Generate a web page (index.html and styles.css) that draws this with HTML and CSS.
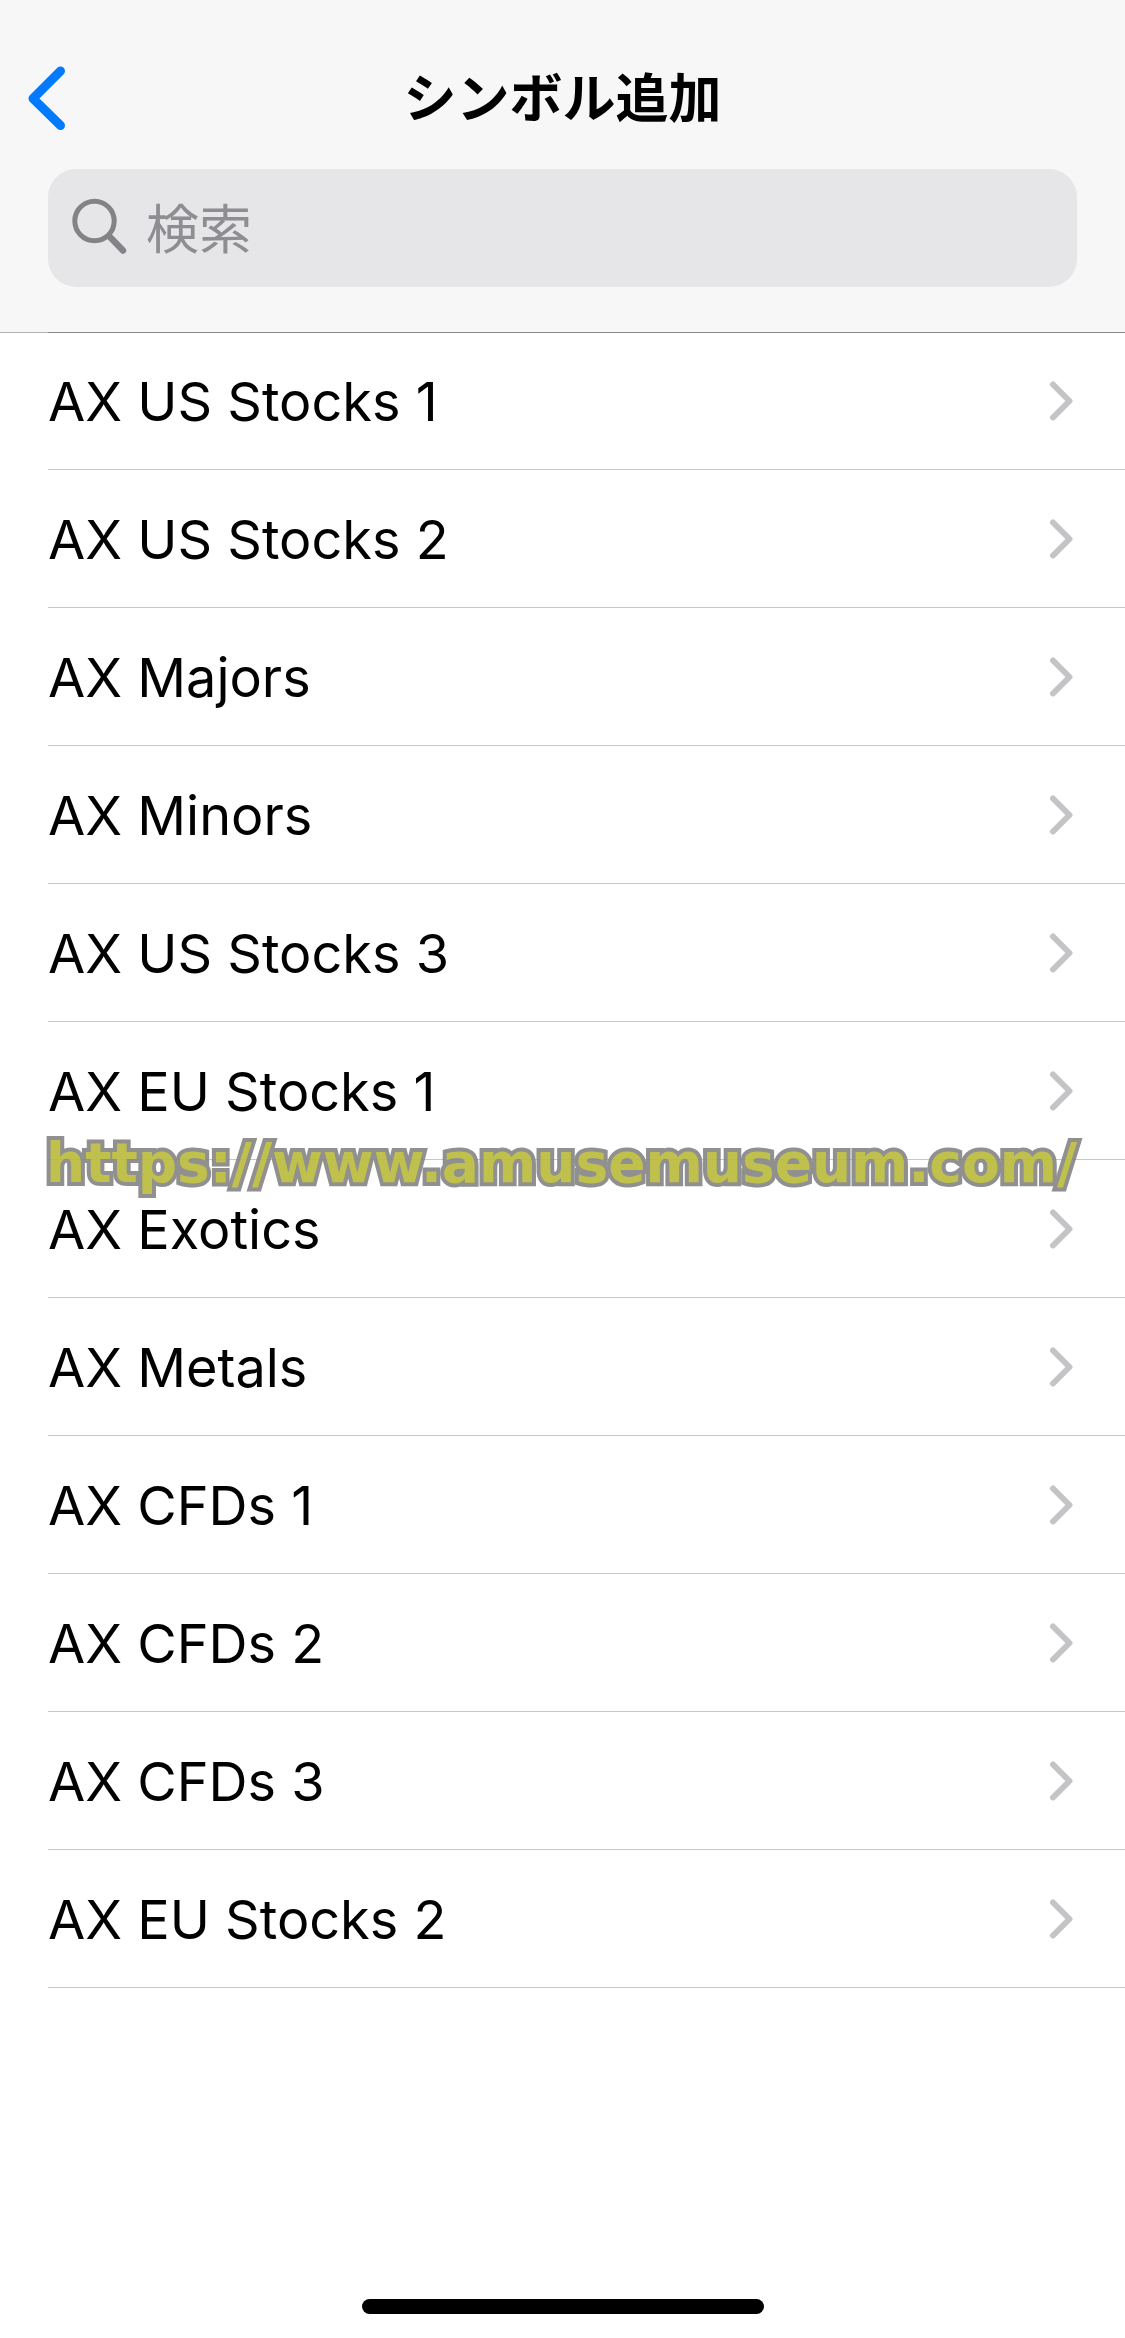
FILE: index.html
```
<!DOCTYPE html>
<html lang="ja">
<head>
    <meta charset="utf-8">
    <meta name="viewport" content="width=device-width, initial-scale=1">
    <title>シンボル追加</title>
    <link rel="stylesheet" href="styles.css">
</head>
<body>
    <header class="header">
        <div class="navbar">
            <button type="button" class="back" aria-label="戻る">
                <svg width="38" height="64" viewBox="0 0 38 64" fill="none" stroke="#007aff" stroke-width="9" stroke-linecap="round" stroke-linejoin="round">
                    <path d="M32.500 5 5 32.500l27.500 27"/>
                </svg>
            </button>
            <h1 class="title">シンボル追加</h1>
        </div>
        <form class="search">
            <svg class="search-icon" width="56" height="60" viewBox="0 0 56 60" fill="none" stroke="#838387" stroke-linecap="round">
                <circle cx="22.500" cy="23" r="19.700" stroke-width="5"/>
                <path d="M37 38 51 52.500" stroke-width="6.500"/>
            </svg>
            <input type="search" class="search-input" placeholder="検索" aria-label="検索">
        </form>
    </header>

    <main>
        <ul class="list">
            <li><a href="#" class="row">AX US Stocks 1</a></li>
            <li><a href="#" class="row">AX US Stocks 2</a></li>
            <li><a href="#" class="row">AX Majors</a></li>
            <li><a href="#" class="row">AX Minors</a></li>
            <li><a href="#" class="row">AX US Stocks 3</a></li>
            <li>
                <a href="#" class="row">AX EU Stocks 1</a>
                <span class="watermark">https://www.amusemuseum.com/</span>
            </li>
            <li><a href="#" class="row">AX Exotics</a></li>
            <li><a href="#" class="row">AX Metals</a></li>
            <li><a href="#" class="row">AX CFDs 1</a></li>
            <li><a href="#" class="row">AX CFDs 2</a></li>
            <li><a href="#" class="row">AX CFDs 3</a></li>
            <li><a href="#" class="row">AX EU Stocks 2</a></li>
        </ul>
    </main>

    <div class="home-indicator"></div>

    <!-- disclosure arrow at the end of each row -->
    <script>
        document.querySelectorAll(".row").forEach((row) => {
            row.insertAdjacentHTML("beforeend",
                '<svg class="chevron" width="24" height="42" viewBox="0 0 24 42" fill="none" stroke="#c4c4c7" stroke-width="6" stroke-linecap="round" stroke-linejoin="round"><path d="M4 3.500 20.500 20 4 36.500"/></svg>');
        });
    </script>
</body>
</html>
```
FILE: styles.css
```
* {
    box-sizing: border-box;
}

body {
    display: flex;
    flex-direction: column;
    min-height: 100vh;
    margin: 0;
    background-color: #fff;
    color: #000;
    font-family: Inter, "Noto Sans CJK JP", sans-serif;
}

.header {
    position: relative;
    padding: 32px 48px 45px;
    background-color: #f7f7f7;
    box-shadow: 0 1px 0 rgba(0, 0, 0, 0.3);
}

.navbar {
    display: grid;
    grid-template-columns: 1fr auto 1fr;
    align-items: center;
    height: 132px;
    margin-bottom: 5px;
}

.back {
    justify-self: start;
    height: 64px;
    margin-left: -20px;
    padding: 0;
    border: none;
    background: none;
    cursor: pointer;
}

.back svg {
    display: block;
}

.title {
    margin: 0;
    padding-bottom: 6px;
    font-family: "Noto Sans CJK JP", sans-serif;
    font-size: 53px;
    font-weight: bold;
    line-height: 72px;
}

.search {
    display: flex;
    align-items: center;
    gap: 18px;
    height: 118px;
    margin: 0;
    padding: 0 24px;
    border-radius: 28px;
    background-color: #e6e6e8;
}

.search-icon {
    flex: none;
}

.search-input {
    flex: 1;
    min-width: 0;
    height: 100%;
    padding: 0 0 4px;
    border: none;
    outline: none;
    background: none;
    font-family: "Noto Sans CJK JP", sans-serif;
    font-size: 53px;
}

.search-input::placeholder {
    color: #8e8e92;
}

.list {
    margin: 0;
    padding: 0 0 0 48px;
    list-style: none;
}

.list li {
    position: relative;
    border-bottom: 1px solid #c6c6c8;
}

.list li:first-child {
    box-shadow: inset 0 1px 0 #8a8a8c;
}

.row {
    display: flex;
    align-items: center;
    justify-content: space-between;
    height: 137px;
    padding: 2px 52px 0 0;
    color: inherit;
    font-size: 54px;
    line-height: 68px;
    text-decoration: none;
}

.chevron {
    flex: none;
}

.watermark {
    position: absolute;
    z-index: 1;
    left: -2px;
    bottom: -38px;
    color: #bcbc40;
    font-family: "DejaVu Sans", sans-serif;
    font-size: 55px;
    font-weight: bold;
    line-height: 68px;
    white-space: nowrap;
    opacity: 0.93;
    pointer-events: none;
    paint-order: stroke fill;
    -webkit-text-stroke: 8px #888;
}

.home-indicator {
    width: 402px;
    height: 15px;
    margin: auto auto 24px;
    border-radius: 8px;
    background-color: #000;
}
```
